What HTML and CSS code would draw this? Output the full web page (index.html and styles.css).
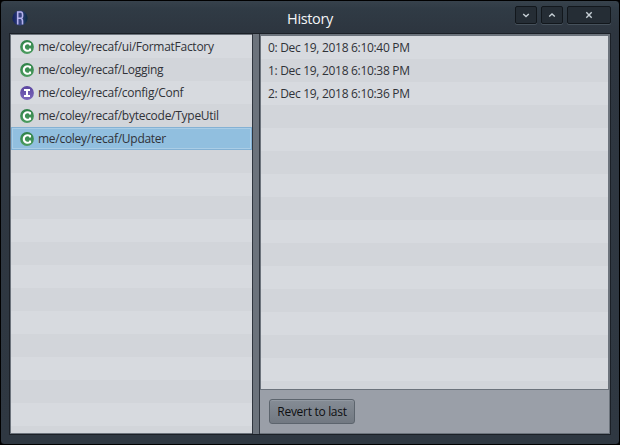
FILE: index.html
```html
<!DOCTYPE html>
<html lang="en">
<head>
<meta charset="utf-8">
<title>History</title>
<link rel="stylesheet" href="styles.css">
</head>
<body>
<svg class="defs" width="0" height="0">
  <defs>
    <linearGradient id="green" x1="0" y1="0" x2="0" y2="1"><stop offset="0" stop-color="#2f8248"/><stop offset="1" stop-color="#4c9c60"/></linearGradient>
    <linearGradient id="violet" x1="0" y1="0" x2="0" y2="1"><stop offset="0" stop-color="#5b45a0"/><stop offset="1" stop-color="#7c68bc"/></linearGradient>
    <linearGradient id="logo"><stop offset="0" stop-color="#10205a"/><stop offset=".5" stop-color="#3b4586"/><stop offset="1" stop-color="#092b40"/></linearGradient>
    <symbol id="class" viewBox="0 0 14 14"><circle cx="7" cy="7" r="6.9" fill="url(#green)"/><path d="M10 5.6V3.9C8 2.7 3.8 3 3.8 7s4.2 4.3 6.2 3.1V8.4" fill="none" stroke="#fff" stroke-width="2.1"/></symbol>
    <symbol id="interface" viewBox="0 0 14 14"><circle cx="7" cy="7" r="6.9" fill="url(#violet)"/><path d="M4 4h6M4 10h6M7 4v6" fill="none" stroke="#fff" stroke-width="2"/></symbol>
  </defs>
</svg>
<div class="window">
  <header class="titlebar">
    <svg class="logo" viewBox="0 0 16 16"><circle cx="8" cy="8" r="7.6" fill="url(#logo)"/><path d="M5.7 14.5V2h3.1q1.8 0 1.8 3.2T8.8 8.3H6M8.7 8.3q1.8.3 1.8 3v3.2" fill="none" stroke="#b5b2ec" stroke-width="1.6"/></svg>
    <h1 class="title">History</h1>
    <div class="controls">
      <button class="control" aria-label="Minimize"><svg viewBox="0 0 8 8"><path d="M1.2 3L4 5.5 6.8 3"/></svg></button>
      <button class="control" aria-label="Maximize"><svg viewBox="0 0 8 8"><path d="M1.2 5.5L4 3l2.8 2.5"/></svg></button>
      <button class="control close" aria-label="Close"><svg viewBox="0 0 8 8"><path d="M1.3 1.3l5.4 5.4M6.7 1.3L1.3 6.7"/></svg></button>
    </div>
  </header>
  <main class="content">
    <ul class="list files">
      <li><svg class="icon"><use href="#class"/></svg><span>me/coley/recaf/ui/FormatFactory</span></li>
      <li><svg class="icon"><use href="#class"/></svg><span>me/coley/recaf/Logging</span></li>
      <li><svg class="icon"><use href="#interface"/></svg><span>me/coley/recaf/config/Conf</span></li>
      <li><svg class="icon"><use href="#class"/></svg><span>me/coley/recaf/bytecode/TypeUtil</span></li>
      <li class="selected"><svg class="icon"><use href="#class"/></svg><span>me/coley/recaf/Updater</span></li>
    </ul>
    <div class="divider"></div>
    <section class="details">
      <ul class="list revisions">
        <li>0: Dec 19, 2018 6:10:40 PM</li>
        <li>1: Dec 19, 2018 6:10:38 PM</li>
        <li>2: Dec 19, 2018 6:10:36 PM</li>
      </ul>
      <div class="actions"><button class="revert">Revert to last</button></div>
    </section>
  </main>
</div>
</body>
</html>
```
FILE: styles.css
```css
* { box-sizing: border-box; }
body { margin: 0; background: #000; font: 12px/16px "Open Sans", "Noto Sans", sans-serif; color: #303238; }
.defs { position: absolute; }
.window { width: 620px; height: 445px; border: 1px solid #000; border-radius: 4px; padding: 0 8px 9px; background: linear-gradient(#37424c 0, #303b45 8px, #2d353f 32px, #2f3842 100%); display: flex; flex-direction: column; }
.titlebar { height: 32px; flex: none; display: grid; grid-template-columns: 1fr auto 1fr; align-items: start; }
.logo { width: 16px; height: 16px; margin: 9px 0 0 3px; }
.title { margin: 8px 0 0; font-size: 14.5px; line-height: 20px; font-weight: 400; color: #f4f5f6; letter-spacing: -.35px; }
.controls { display: flex; justify-content: flex-end; gap: 4px; padding-top: 5px; }
.control { width: 22px; height: 18px; padding: 0; border: 1px solid #12171c; border-radius: 2px; background: #252d35; box-shadow: 0 1px #46515b; display: flex; align-items: center; justify-content: center; }
.control.close { width: 44px; }
.control svg { width: 8px; height: 8px; fill: none; stroke: #c7d0d6; stroke-width: 1.4; }
.content { flex: 1; min-height: 0; border: 1px solid #1b2027; display: flex; }
.list { list-style: none; margin: 0; padding: 0; border: 0 solid #6c737c; background: repeating-linear-gradient(#d7dadf 0 23px, #d2d5da 23px 46px); }
.list li { height: 23px; display: flex; align-items: center; white-space: nowrap; }
.files { width: 242px; border-width: 1px 0 1px 1px; }
.files li { padding-left: 9px; gap: 4px; letter-spacing: -.27px; }
.files li span { padding-top: 1px; }
.files .selected { background: #91bfdf; border: 1px solid #83b1d4; box-shadow: inset 0 0 0 1px #aacde6; padding-left: 8px; }
.icon { width: 14px; height: 14px; }
.divider { width: 8px; background: #6c737c; border: solid #30363f; border-width: 0 1px; }
.details { flex: 1; display: flex; flex-direction: column; background: #9a9fa8; border: solid #6c737c; border-width: 0 1px 1px 0; }
.revisions { height: 356px; border-width: 2px 1px 1px; }
.revisions li { padding-left: 7px; letter-spacing: -.31px; }
.actions { padding: 9px; }
.revert { display: block; width: 86px; height: 25px; padding: 0; border: 1px solid #5c646d; border-radius: 3px; background: linear-gradient(#858c95, #727982); box-shadow: inset 0 1px #9299a2; font: inherit; color: #0e0f11; letter-spacing: -.3px; }
```
